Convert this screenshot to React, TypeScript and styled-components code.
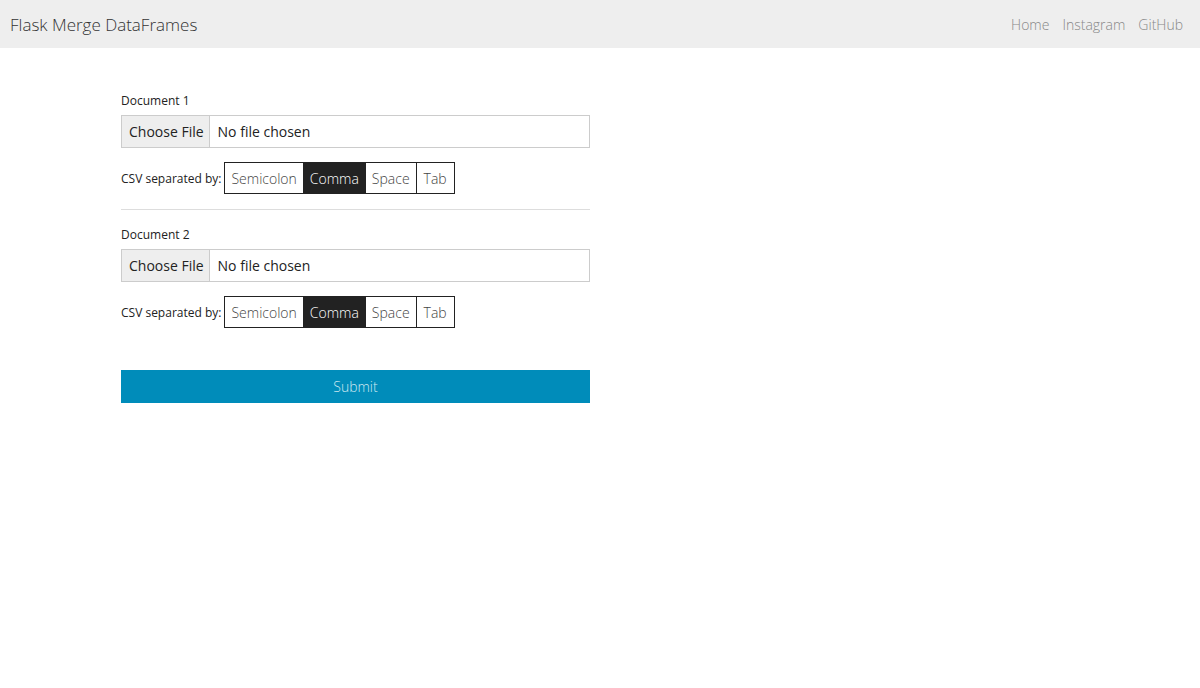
import React, { useState } from 'react';
import styled, { createGlobalStyle } from 'styled-components';

const GlobalStyle = createGlobalStyle`
  body {
    margin: 0;
    font-family: 'Open Sans', 'Liberation Sans', sans-serif;
    background: #fff;
    color: #222;
  }
`;

const separators = ['Semicolon', 'Comma', 'Space', 'Tab'];

const DocumentBlock: React.FC<{ title: string }> = ({ title }) => {
  const [sep, setSep] = useState<string>('Comma');

  return (
    <StyledBlock>
      <Label>{title}</Label>
      <FileBox>
        <ChooseButton>Choose File</ChooseButton>
        <FileName>No file chosen</FileName>
      </FileBox>
      <SeparatorRow>
        <SmallLabel>CSV separated by:</SmallLabel>
        <ButtonGroup>
          {separators.map((s) => (
            <ToggleButton key={s} $active={sep === s} onClick={() => setSep(s)}>
              {s}
            </ToggleButton>
          ))}
        </ButtonGroup>
      </SeparatorRow>
    </StyledBlock>
  );
};

const App: React.FC = () => {
  return (
    <>
      <GlobalStyle />
      <Navbar>
        <Brand>Flask Merge DataFrames</Brand>
        <NavLinks>
          <NavLink>Home</NavLink>
          <NavLink>Instagram</NavLink>
          <NavLink>GitHub</NavLink>
        </NavLinks>
      </Navbar>
      <Main>
        <Form>
          <DocumentBlock title="Document 1" />
          <Divider />
          <DocumentBlock title="Document 2" />
          <Submit>Submit</Submit>
        </Form>
      </Main>
    </>
  );
};

const Navbar = styled.nav`
  display: flex;
  align-items: center;
  justify-content: space-between;
  height: 48px;
  padding: 0 17px 0 10px;
  background: #eeeeee;
`;

const Brand = styled.a`
  font-size: 17px;
  font-weight: 300;
  color: #333;
`;

const NavLinks = styled.div`
  display: flex;
  gap: 13px;
`;

const NavLink = styled.a`
  font-size: 14px;
  font-weight: 300;
  color: #888;
`;

const Main = styled.main`
  padding: 44px 0 0 121px;
`;

const Form = styled.div`
  width: 469px;
  display: flex;
  flex-direction: column;
`;

const StyledBlock = styled.div`
  display: flex;
  flex-direction: column;
`;

const Label = styled.label`
  font-size: 12px;
  line-height: 17px;
  color: #222;
  margin-bottom: 6px;
`;

const FileBox = styled.div`
  display: flex;
  height: 33px;
  box-sizing: border-box;
  border: 1px solid #ccc;
`;

const ChooseButton = styled.div`
  display: flex;
  align-items: center;
  padding: 0 5px 0 7px;
  background: #eeeeee;
  border-right: 1px solid #ccc;
  font-size: 14px;
  color: #222;
`;

const FileName = styled.div`
  display: flex;
  align-items: center;
  padding: 0 8px;
  font-size: 14px;
  color: #222;
`;

const SeparatorRow = styled.div`
  display: flex;
  align-items: center;
  gap: 3px;
  margin-top: 14px;
`;

const SmallLabel = styled.span`
  font-size: 12px;
  color: #222;
`;

const ButtonGroup = styled.div`
  display: flex;
`;

const ToggleButton = styled.button<{ $active: boolean }>`
  height: 32px;
  padding: 0 6px;
  margin: 0 0 0 -1px;
  font-family: inherit;
  font-size: 14px;
  font-weight: 300;
  border: 1px solid #222;
  border-radius: 0;
  background: ${(p) => (p.$active ? '#222' : '#fff')};
  color: ${(p) => (p.$active ? '#fff' : '#444')};
  cursor: pointer;

  &:first-child {
    margin-left: 0;
  }

  &:last-child {
    padding: 0 7px;
  }
`;

const Divider = styled.hr`
  width: 100%;
  margin: 15px 0 16px;
  border: 0;
  border-top: 1px solid #ddd;
`;

const Submit = styled.button`
  margin-top: 42px;
  height: 33px;
  border: 0;
  border-radius: 0;
  background: #008cba;
  color: #cfe8f1;
  font-family: inherit;
  font-size: 14px;
  font-weight: 300;
  cursor: pointer;
`;

export default App;
